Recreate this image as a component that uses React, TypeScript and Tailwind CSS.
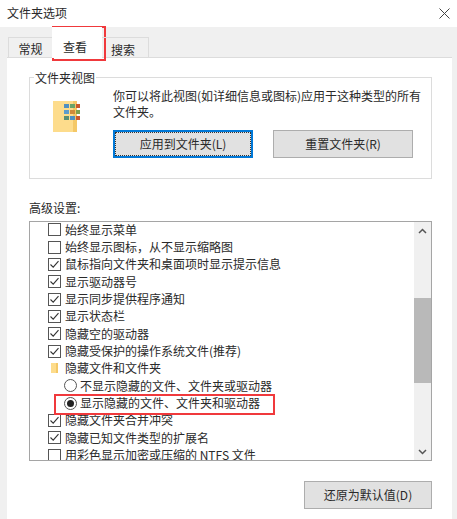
const rows1 = [
  { t: "始终显示菜单", c: false },
  { t: "始终显示图标，从不显示缩略图", c: false },
  { t: "鼠标指向文件夹和桌面项时显示提示信息", c: true },
  { t: "显示驱动器号", c: true },
  { t: "显示同步提供程序通知", c: true },
  { t: "显示状态栏", c: true },
  { t: "隐藏空的驱动器", c: true },
  { t: "隐藏受保护的操作系统文件(推荐)", c: true },
];
const rows2 = [
  { t: "隐藏文件夹合并冲突", c: true },
  { t: "隐藏已知文件类型的扩展名", c: true },
  { t: "用彩色显示加密或压缩的 NTFS 文件", c: false },
];

function Check({ t, c }: { t: string; c: boolean }) {
  return (
    <div className="flex h-[17.35px] shrink-0 items-center pl-[18px]">
      <span className="flex h-[13px] w-[13px] shrink-0 items-center justify-center border border-[#555] bg-white">
        {c && (
          <svg width="11" height="11" viewBox="0 0 11 11" fill="none">
            <path d="M1.5 5.5 L4.2 8.2 L9.5 2.2" stroke="#333" strokeWidth="1.1" />
          </svg>
        )}
      </span>
      <span className="ml-[4px] whitespace-nowrap">{t}</span>
    </div>
  );
}

function Radio({ on, t }: { on: boolean; t: string }) {
  return (
    <div className="flex h-[17.35px] shrink-0 items-center pl-[34px]">
      <span className="flex h-[13px] w-[13px] shrink-0 items-center justify-center rounded-full border border-[#555] bg-white">
        {on && <span className="h-[7px] w-[7px] rounded-full bg-[#222]" />}
      </span>
      <span className="ml-[3px] whitespace-nowrap">{t}</span>
    </div>
  );
}

export default function App() {
  return (
    <div
      className="relative flex h-[519px] w-[457px] flex-col overflow-hidden bg-white text-[12px] leading-[16px] text-[#2a2a2a]"
      style={{ fontFamily: '"Noto Sans CJK SC", "Noto Sans", sans-serif' }}
    >
      {/* Title bar */}
      <div className="flex h-[27px] shrink-0 items-center justify-between pb-[2px] pl-[7px] pr-[7px]">
        <span>文件夹选项</span>
        <svg className="mt-[2px]" width="11" height="11" viewBox="0 0 11 11" fill="none">
          <path d="M0.5 0.5 L10.5 10.5 M10.5 0.5 L0.5 10.5" stroke="#444" strokeWidth="1" />
        </svg>
      </div>

      {/* Body */}
      <div className="flex flex-1 flex-col bg-[#f0f0f0] pl-[7px] pr-[5px]">
        {/* Tabs */}
        <div className="relative z-10 -mb-px flex h-[31px] shrink-0 items-end pl-px">
          <div className="flex h-[21px] w-[45px] items-center justify-center border border-b-0 border-[#dcdcdc] pt-px">常规</div>
          <div className="-ml-px flex h-[31px] w-[50px] items-center justify-center bg-white pr-[4px] pt-[9px]">查看</div>
          <div className="flex h-[21px] w-[47px] items-center justify-center border border-b-0 border-l-0 border-[#dcdcdc] pr-[4px] pt-[3px]">搜索</div>
        </div>

        {/* Page */}
        <div className="flex flex-1 flex-col border-t border-[#dcdcdc] bg-white pl-[22px] pr-[20px] pt-[19px]">
          {/* Group */}
          <div className="relative flex h-[102px] shrink-0 border border-[#dcdcdc] pl-[23px]">
            <span className="absolute left-[4px] top-[-8px] bg-white px-px">文件夹视图</span>
            <svg className="mt-[23px] shrink-0" width="28" height="32" viewBox="0 0 28 32">
              <rect x="0" y="0" width="24" height="31" fill="#fddc8c" />
              <rect x="20" y="0" width="4" height="31" fill="#f4c867" />
              <rect x="11" y="3" width="5" height="4" fill="#4f8fc0" />
              <rect x="17" y="3" width="5" height="4" fill="#6aa36a" />
              <rect x="23" y="3" width="4" height="4" fill="#c9582e" />
              <rect x="11" y="9" width="5" height="4" fill="#5d9ccc" />
              <rect x="17" y="9" width="5" height="4" fill="#d08a3a" />
              <rect x="23" y="9" width="4" height="4" fill="#7fa04f" />
              <rect x="11" y="15" width="5" height="4" fill="#5a8f73" />
              <rect x="17" y="15" width="5" height="4" fill="#4f8fc0" />
              <rect x="23" y="15" width="4" height="4" fill="#c9582e" />
            </svg>
            <div className="ml-[32px] flex min-w-0 flex-1 flex-col pt-[10px]">
              <p className="w-[312px]">你可以将此视图(如详细信息或图标)应用于这种类型的所有文件夹。</p>
              <div className="mt-[10px] flex gap-[20px]">
                <button className="flex h-[28px] w-[140px] items-center justify-center border-2 border-[#0078d7] bg-[#e1e1e1] outline-1 -outline-offset-3 outline-dotted outline-[#333]">
                  应用到文件夹(L)
                </button>
                <button className="flex h-[28px] w-[140px] items-center justify-center border border-[#adadad] bg-[#e1e1e1]">
                  重置文件夹(R)
                </button>
              </div>
            </div>
          </div>

          <div className="mt-[21px] h-[16px] shrink-0">高级设置:</div>

          {/* List */}
          <div className="mt-[5px] flex h-[240px] shrink-0 border border-[#a5a5a5]">
            <div className="flex min-w-0 flex-1 flex-col overflow-hidden">
              <div className="-mt-[1px] flex flex-col">
                {rows1.map((r) => (
                  <Check key={r.t} {...r} />
                ))}
                <div className="flex h-[17.35px] shrink-0 items-center pl-[20px]">
                  <svg width="9" height="12" viewBox="0 0 9 12">
                    <rect x="1" y="1" width="7" height="10" fill="#fddc8c" />
                    <rect x="6" y="1" width="2" height="10" fill="#f4c867" />
                  </svg>
                  <span className="ml-[6px] whitespace-nowrap">隐藏文件和文件夹</span>
                </div>
                <Radio on={false} t="不显示隐藏的文件、文件夹或驱动器" />
                <Radio on t="显示隐藏的文件、文件夹和驱动器" />
                {rows2.map((r) => (
                  <Check key={r.t} {...r} />
                ))}
              </div>
            </div>
            {/* Scrollbar */}
            <div className="flex w-[17px] shrink-0 flex-col bg-[#f0f0f0]">
              <div className="flex h-[17px] shrink-0 items-center justify-center">
                <svg width="9" height="6" viewBox="0 0 9 6" fill="none">
                  <path d="M1 5 L4.5 1.5 L8 5" stroke="#555" strokeWidth="1.5" />
                </svg>
              </div>
              <div className="mt-[59px] h-[85px] shrink-0 bg-[#b9b9b9]" />
              <div className="flex-1" />
              <div className="flex h-[17px] shrink-0 items-center justify-center">
                <svg width="9" height="6" viewBox="0 0 9 6" fill="none">
                  <path d="M1 1 L4.5 4.5 L8 1" stroke="#555" strokeWidth="1.5" />
                </svg>
              </div>
            </div>
          </div>

          <div className="mt-[20px] flex justify-end">
            <button className="flex h-[28px] w-[128px] items-center justify-center border border-[#adadad] bg-[#e1e1e1]">
              还原为默认值(D)
            </button>
          </div>
        </div>
      </div>

      {/* Red annotations */}
      <div className="absolute left-[52px] top-[26px] h-[35px] w-[54px] border-2 border-[#f0393c]" />
      <div className="absolute left-[54px] top-[394px] h-[21px] w-[221px] border-2 border-[#f0393c]" />
    </div>
  );
}
